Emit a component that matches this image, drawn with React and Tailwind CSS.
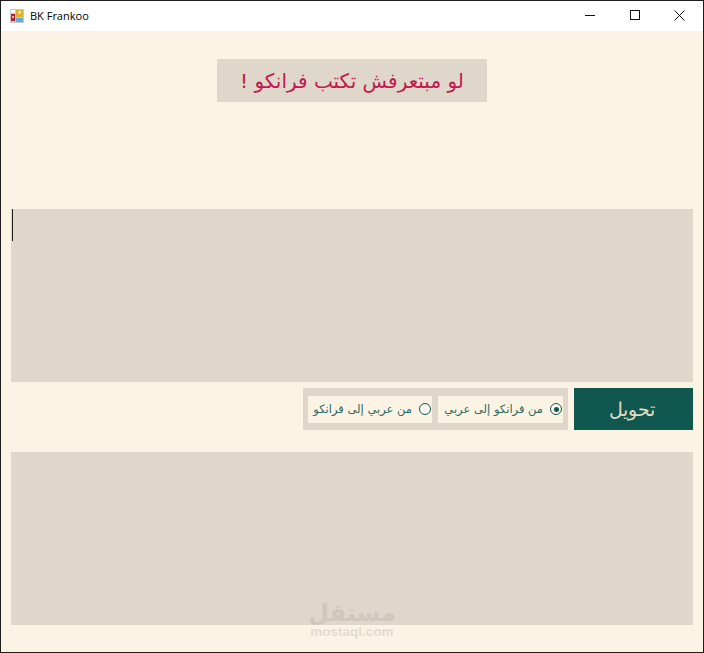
// App.jsx
const arabic = "font-['DejaVu_Sans','Noto_Sans',sans-serif]";

function AppIcon() {
  return (
    <svg width="14" height="14" viewBox="0 0 14 14" className="shrink-0">
      <rect x="0" y="0" width="14" height="14" fill="#c9c9c9" />
      <rect x="1" y="1" width="4" height="3" fill="#fff" />
      <rect x="6" y="1" width="7" height="7" fill="#e3ad2c" />
      <rect x="8" y="2" width="3" height="3" fill="#f6dc8e" />
      <rect x="1" y="5" width="4" height="7" fill="#b3242c" />
      <rect x="2" y="7" width="2" height="2" fill="#e8b0a8" />
      <rect x="6" y="9" width="7" height="4" fill="#5aaedb" />
    </svg>
  );
}

function WindowButtons() {
  return (
    <div className="flex items-center h-full pb-[2px] pr-[1px]">
      <div className="w-[45px] h-full flex items-center justify-center">
        <svg width="10" height="10" viewBox="0 0 10 10">
          <path d="M0 5.5H10" stroke="#111" strokeWidth="1" />
        </svg>
      </div>
      <div className="w-[45px] h-full flex items-center justify-center">
        <svg width="10" height="10" viewBox="0 0 10 10">
          <rect x="0.5" y="0.5" width="9" height="9" fill="none" stroke="#111" strokeWidth="1" />
        </svg>
      </div>
      <div className="w-[45px] h-full flex items-center justify-center">
        <svg width="11" height="11" viewBox="0 0 11 11">
          <path d="M0.5 0.5L10.5 10.5M10.5 0.5L0.5 10.5" stroke="#111" strokeWidth="1" fill="none" />
        </svg>
      </div>
    </div>
  );
}

function Radio({ label, checked, width }) {
  return (
    <div className={`h-[27px] ${width} bg-[#fbf3e4] flex items-center justify-start gap-[7px] pr-[1px] pl-[4px]`} dir="rtl">
      <span className="w-[12px] h-[12px] rounded-full border border-[#10574f] bg-[#fdf9f0] flex items-center justify-center shrink-0">
        {checked && <span className="w-[5px] h-[5px] rounded-full bg-[#10574f]" />}
      </span>
      <span className={`${arabic} text-[11.5px] leading-none pt-[1px] text-[#2b6a62] whitespace-nowrap`}>{label}</span>
    </div>
  );
}

export default function App() {
  return (
    <div className="relative w-[704px] h-[653px] flex flex-col bg-[#fbf3e4] border border-[#1c1c1c] overflow-hidden">
      {/* barre de titre */}
      <div className="h-[30px] bg-white flex items-center justify-between shrink-0">
        <div className="flex items-center gap-[6px] pl-[9px]">
          <AppIcon />
          <span className="font-['Open_Sans','Noto_Sans',sans-serif] text-[11px] text-black">BK Frankoo</span>
        </div>
        <WindowButtons />
      </div>

      <div className="flex flex-col px-[10px]">
        {/* titre */}
        <div className="mt-[28px] self-center w-[270px] h-[43px] bg-[#dfd7ca] flex items-center justify-center" dir="rtl">
          <span className={`${arabic} text-[20px] leading-none text-[#c2184f]`}>لو مبتعرفش تكتب فرانكو !</span>
        </div>

        {/* texte source */}
        <div className="mt-[107px] h-[173px] bg-[#dfd7ca]">
          <div className="ml-[1px] w-[1px] h-[32px] bg-[#1c1c1c]" />
        </div>

        {/* options */}
        <div className="mt-[6px] h-[42px] flex justify-end gap-[6px]">
          <div className="w-[265px] h-full bg-[#dfd7ca] flex items-center justify-end gap-[6px] pl-[5px] pr-[5px]">
            <Radio label="من عربي إلى فرانكو" width="w-[124px]" />
            <Radio label="من فرانكو إلى عربي" width="w-[125px]" checked />
          </div>
          <div className="w-[119px] h-full bg-[#10574f] flex items-center justify-center pr-[3px]">
            <span className={`${arabic} text-[19px] font-light leading-none text-[#e6dcc4]`}>تحويل</span>
          </div>
        </div>

        {/* resultat */}
        <div className="mt-[22px] h-[173px] bg-[#dfd7ca]" />
      </div>

      {/* filigrane */}
      <div className="absolute left-[307px] top-[600px] w-[88px] flex flex-col items-center text-[#a8a8a8] opacity-30 pointer-events-none">
        <span className={`${arabic} text-[24px] font-bold leading-[24px]`}>مستقل</span>
        <span className="font-['Liberation_Sans',sans-serif] text-[13.5px] font-bold leading-[14px]">mostaql.com</span>
      </div>
    </div>
  );
}
